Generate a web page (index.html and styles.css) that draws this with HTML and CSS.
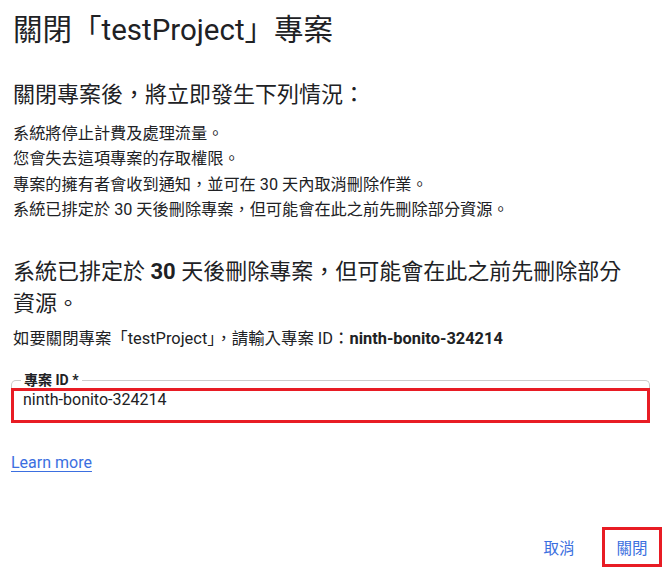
FILE: index.html
```html
<!DOCTYPE html>
<html lang="zh-Hant">
<head>
<meta charset="utf-8">
<title>關閉專案</title>
<link rel="stylesheet" href="styles.css">
</head>
<body>
<div class="dialog">
  <h1 class="title">關閉「testProject」專案</h1>
  <h2 class="subtitle">關閉專案後，將立即發生下列情況：</h2>
  <ul class="effects">
    <li>系統將停止計費及處理流量。</li>
    <li>您會失去這項專案的存取權限。</li>
    <li>專案的擁有者會收到通知，並可在 30 天內取消刪除作業。</li>
    <li>系統已排定於 30 天後刪除專案，但可能會在此之前先刪除部分資源。</li>
  </ul>
  <p class="notice">系統已排定於 <b>30</b> 天後刪除專案，但可能會在此之前先刪除部分資源。</p>
  <p class="prompt">如要關閉專案「testProject」，請輸入專案 ID：<b>ninth-bonito-324214</b></p>
  <fieldset class="field">
    <legend class="field-label">專案 ID *</legend>
    <div class="field-input">ninth-bonito-324214</div>
  </fieldset>
  <a class="learn" href="#">Learn more</a>
  <div class="actions">
    <button class="btn">取消</button>
    <button class="btn btn-marked">關閉</button>
  </div>
</div>
</body>
</html>
```
FILE: styles.css
```css
html, body {
  margin: 0;
  padding: 0;
  background: #ffffff;
}
body {
  font-family: Roboto, "Noto Sans CJK TC", sans-serif;
  color: #202124;
}
.dialog {
  width: 667px;
  height: 577px;
  box-sizing: border-box;
  padding: 11px 5px 0 11px;
  display: flex;
  flex-direction: column;
}
.title {
  margin: 0 0 0 2px;
  font-size: 29.5px;
  font-weight: 400;
  line-height: 38px;
}
.subtitle {
  margin: 32px 0 0 2px;
  font-size: 22px;
  font-weight: 400;
  line-height: 28px;
}
.effects {
  list-style: none;
  margin: 12px 0 0 2px;
  padding: 0;
  font-size: 16.2px;
  line-height: 25.3px;
}
.notice {
  margin: 34px 0 0 2px;
  max-width: 630px;
  font-size: 22px;
  line-height: 32px;
}
.notice b {
  font-weight: 700;
}
.prompt {
  margin: 8px 0 0 2px;
  font-size: 16.4px;
  line-height: 22px;
}
.prompt b {
  font-weight: 700;
}
.field {
  margin: 22px 0 0 0;
  padding: 0;
  width: 639px;
  box-sizing: border-box;
  border: 1px solid #cccccc;
  border-bottom: 0;
  border-radius: 5px 5px 0 0;
}
.field-label {
  margin-left: 9px;
  padding: 0 3px;
  font-size: 14px;
  font-weight: 700;
  line-height: 16px;
  color: #202124;
}
.field-input {
  margin: 0 -1px 0 -1px;
  height: 35px;
  box-sizing: border-box;
  border: 3px solid #e81c24;
  padding: 0 0 0 9px;
  font-size: 16px;
  line-height: 18px;
}
.learn {
  align-self: flex-start;
  margin-top: 30px;
  font-size: 16px;
  line-height: 20px;
  color: #3b6fe0;
  text-decoration: underline;
  text-underline-offset: 3px;
}
.actions {
  margin-top: auto;
  margin-bottom: 10px;
  display: flex;
  justify-content: flex-end;
  gap: 13px;
}
.btn {
  background: transparent;
  border: 3px solid transparent;
  height: 40px;
  width: 60px;
  padding: 0;
  font-family: Roboto, "Noto Sans CJK TC", sans-serif;
  font-size: 15.5px;
  color: #3b6fe0;
}
.btn-marked {
  border-color: #e81c24;
}
```
